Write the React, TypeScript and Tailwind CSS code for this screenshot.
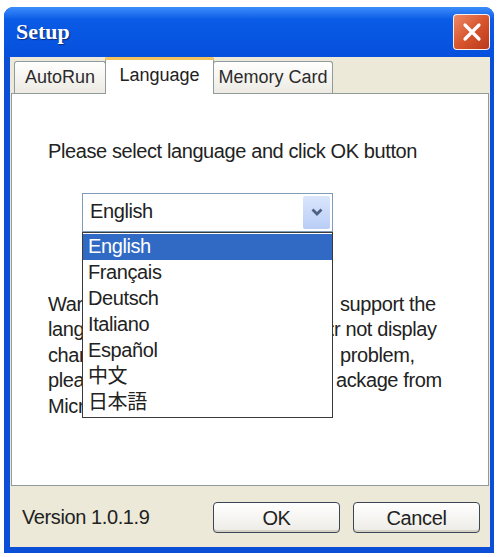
import React from 'react'

const ui = { fontFamily: '"Liberation Sans", Arial, sans-serif' }
const cjk = { fontFamily: '"Liberation Sans", "Noto Sans CJK JP", "Noto Sans CJK SC", sans-serif' }

const languages = ['English', 'Français', 'Deutsch', 'Italiano', 'Español', '中文', '日本語']

// one line of the warning note; the left part sits under the open list
function NoteLine({ left, right, width }: { left: string; right?: string; width: string }) {
  return (
    <div className="flex whitespace-nowrap">
      <span className={`${width} overflow-hidden inline-block`}>{left}</span>
      {right && <span>{right}</span>}
    </div>
  )
}

function Tab({ label, width, active = false }: { label: string; width: string; active?: boolean }) {
  if (active) {
    return (
      <div className={`relative z-10 -mb-px -mx-px ${width} h-[37px] pt-[2px] flex justify-center bg-white border-x border-[#919b9c] rounded-t-[3px] text-[18px] text-[#222]`}>
        <div className="absolute left-[-1px] right-[-1px] top-0 h-[3px] rounded-t-[3px] bg-[#f5c35e]" />
        <span className="mt-[3px]">{label}</span>
      </div>
    )
  }
  return (
    <div className={`${width} h-[32px] flex items-center justify-center bg-gradient-to-b from-white to-[#eceae2] border border-b-0 border-[#919b9c] rounded-t-[3px] text-[18px] text-[#2b2b2b]`}>
      {label}
    </div>
  )
}

function Button({ label }: { label: string }) {
  return (
    <button className="w-[127px] h-[31px] rounded-[4px] border border-[#3b4656] bg-gradient-to-b from-white to-[#ecebe6] shadow-[inset_0_-2px_0_#d6d0c5] text-[20px] tracking-[-0.4px] text-[#222]">
      {label}
    </button>
  )
}

export default function App() {
  return (
    <div className="w-[498px] h-[557px] bg-white pt-[7px] pl-[4px] pr-[4px] pb-[4px]" style={ui}>
      <div className="h-full flex flex-col rounded-t-[9px] bg-[#0a4fd6] overflow-hidden">
        {/* title bar */}
        <div className="h-[50px] shrink-0 flex items-center justify-between pl-[12px] pr-[4px] bg-gradient-to-b from-[#3c8dfb] via-[#0a5be6] via-[25%] to-[#0650dc]">
          <span
            className="text-white font-bold text-[22px] mb-[2px]"
            style={{ fontFamily: '"Liberation Serif", "Times New Roman", serif', textShadow: '1px 1px 1px #0a2a7a' }}
          >
            Setup
          </span>
          <div className="w-[37px] h-[36px] rounded-[4px] border border-white/90 bg-gradient-to-br from-[#ec8a66] via-[#d8552d] to-[#b9381a] flex items-center justify-center">
            <svg width="20" height="20" viewBox="0 0 20 20">
              <path d="M3 3 L17 17 M17 3 L3 17" stroke="white" strokeWidth="3.2" strokeLinecap="round" />
            </svg>
          </div>
        </div>

        {/* body */}
        <div className="flex-1 ml-[6px] mr-[4px] mb-[6px] bg-[#ece9d8] flex flex-col">
          {/* tabs */}
          <div className="h-[36px] shrink-0 flex items-end pl-[4px]">
            <Tab label="AutoRun" width="w-[92px]" />
            <Tab label="Language" width="w-[109px]" active />
            <Tab label="Memory Card" width="w-[120px]" />
          </div>

          {/* panel */}
          <div className="h-[393px] mx-px bg-white border border-[#919b9c] pl-[36px] pt-[45px] text-[20px] tracking-[-0.4px] text-[#222] leading-[25.5px]">
            <div>Please select language and click OK button</div>

            <div className="relative mt-[28px] ml-[34px] w-[251px]">
              <div className="h-[39px] border border-[#7f9db9] bg-white flex items-center justify-between pl-[7px] pr-[2px]">
                <span>English</span>
                <div className="w-[27px] h-[33px] rounded-[2px] bg-gradient-to-b from-[#dbe6fc] to-[#b9cdf6] flex items-center justify-center">
                  <svg width="14" height="10" viewBox="0 0 14 10">
                    <path d="M2.5 2.5 L7 7 L11.5 2.5" fill="none" stroke="#4d6185" strokeWidth="2.8" />
                  </svg>
                </div>
              </div>

              {/* open list */}
              <div className="absolute left-0 top-full z-20 w-[251px] border border-[#3a3a3a] bg-white py-px" style={cjk}>
                {languages.map((l, i) => (
                  <div
                    key={l}
                    className={`h-[26px] flex items-center px-[5px] ${i === 0 ? 'bg-[#316ac5] text-white' : 'text-[#222]'}`}
                  >
                    {l}
                  </div>
                ))}
              </div>
            </div>

            <div className="mt-[60px]">
              <NoteLine left="Warning: If your system does not " right="support the" width="w-[292px]" />
              <NoteLine left="language you selected, your compute" right="r not display" width="w-[286px]" />
              <NoteLine left="characters correctly. To solve this " right="problem," width="w-[292px]" />
              <NoteLine left="please download the language p" right="ackage from" width="w-[288px]" />
              <NoteLine left="Microsoft website." width="w-[292px]" />
            </div>
          </div>

          {/* footer */}
          <div className="flex-1 flex items-center pl-[12px] pr-[10px] text-[20px] tracking-[-0.4px] text-[#222]">
            <span className="flex-1">Version 1.0.1.9</span>
            <div className="flex gap-[13px] mt-[1px]">
              <Button label="OK" />
              <Button label="Cancel" />
            </div>
          </div>
        </div>
      </div>
    </div>
  )
}
